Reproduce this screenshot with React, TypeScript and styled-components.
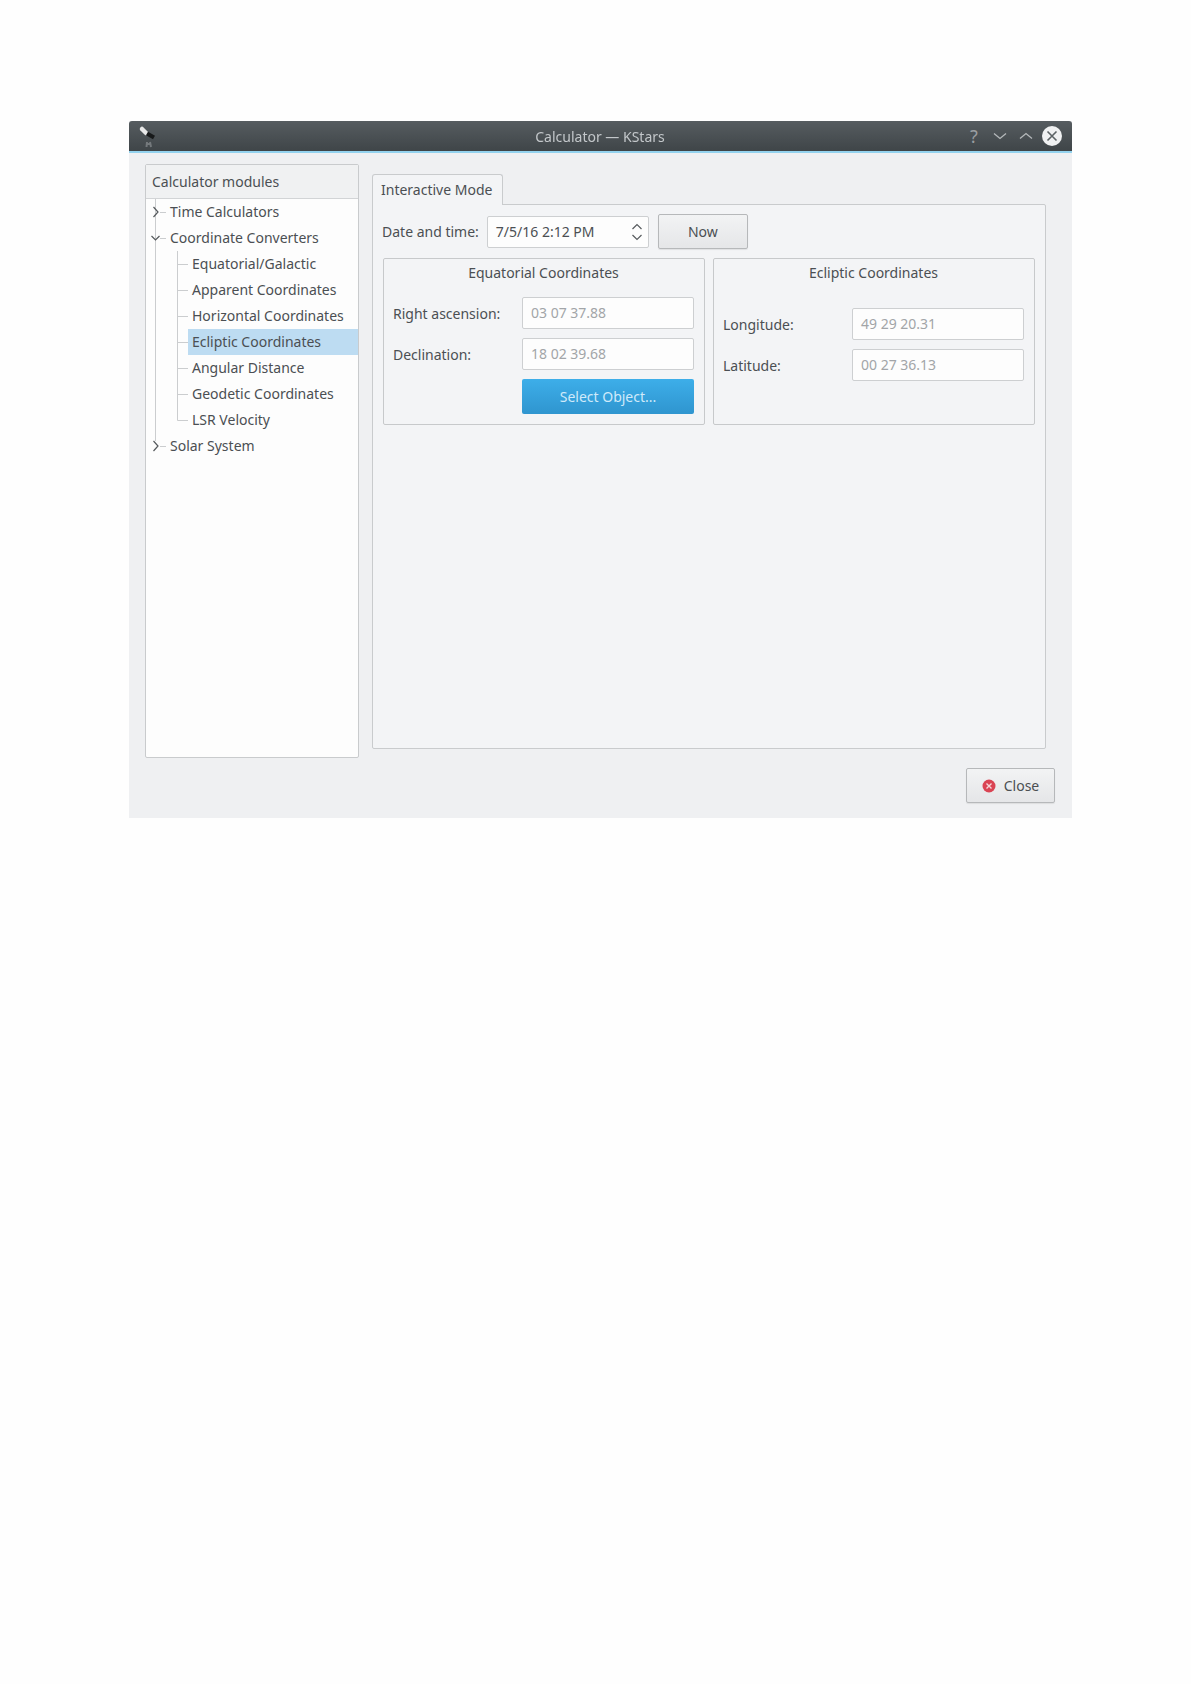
import React from "react";
import styled, { createGlobalStyle } from "styled-components";

const Global = createGlobalStyle`
  html, body { margin: 0; padding: 0; background: #fefefe; }
  body { font-family: "Noto Sans", "Open Sans", sans-serif; font-size: 14px; color: #4b4f53; }
`;

const Page = styled.div`
  height: 1684px;
  padding: 121px 0 0 129px;
  box-sizing: border-box;
`;
const Win = styled.div`
  width: 943px;
  height: 697px;
  background: #eff0f2;
  display: flex;
  flex-direction: column;
  filter: blur(0.4px);
`;
const TitleBar = styled.div`
  height: 30px;
  flex: none;
  position: relative;
  display: flex;
  align-items: center;
  justify-content: flex-end;
  gap: 6px;
  padding-right: 10px;
  background: linear-gradient(#565c60, #3f4548);
  border-bottom: 2px solid #93d2ee;
  border-radius: 3px 3px 0 0;
`;
const TitleText = styled.div`
  position: absolute;
  left: -1px;
  right: 0;
  top: 0;
  line-height: 31px;
  text-align: center;
  color: #c3c7ca;
`;
const AppIcon = styled.svg`
  position: absolute;
  left: 8px;
  top: 4px;
`;
const WinBtn = styled.svg`
  display: block;
`;
const Help = styled.span`
  width: 20px;
  text-align: center;
  color: #9a9ea1;
  font-size: 18px;
  line-height: 29px;
`;
const Main = styled.div`
  flex: 1;
  min-height: 0;
  display: flex;
  gap: 13px;
  padding: 11px 26px 0 16px;
`;
const TreePanel = styled.div`
  width: 214px;
  flex: none;
  box-sizing: border-box;
  border: 1px solid #c9cbcd;
  border-radius: 2px;
  background: #fdfdfd;
`;
const TreeHeader = styled.div`
  height: 33px;
  line-height: 33px;
  padding-left: 6px;
  background: #f0f1f2;
  border-bottom: 1px solid #d2d4d6;
`;
const Row = styled.div`
  height: 26px;
  display: flex;
  white-space: nowrap;
`;
const Guide = styled.svg`
  flex: none;
  display: block;
`;
const RowLabel = styled.div<{ $selected?: boolean }>`
  flex: 1;
  line-height: 26px;
  padding-left: 4px;
  background: ${(p) => (p.$selected ? "#bddcf2" : "transparent")};
`;
const Right = styled.div`
  flex: 1;
  padding: 10px 0 9px;
  display: flex;
  flex-direction: column;
  min-width: 0;
`;
const Tab = styled.div`
  align-self: flex-start;
  width: 131px;
  height: 31px;
  box-sizing: border-box;
  line-height: 29px;
  padding-left: 8px;
  background: #f3f4f6;
  border: 1px solid #c9cbcd;
  border-bottom: none;
  border-radius: 3px 3px 0 0;
  margin-bottom: -1px;
  position: relative;
  z-index: 1;
`;
const Pane = styled.div`
  flex: 1;
  box-sizing: border-box;
  background: #f3f4f6;
  border: 1px solid #c9cbcd;
  border-radius: 0 2px 2px 2px;
  padding: 9px 10px 0 9px;
`;
const DateRow = styled.div`
  display: flex;
  align-items: center;
  height: 35px;
`;
const DateField = styled.div`
  width: 162px;
  height: 32px;
  box-sizing: border-box;
  margin-left: 8px;
  padding: 0 5px 0 8px;
  display: flex;
  align-items: center;
  justify-content: space-between;
  background: #fdfdfd;
  border: 1px solid #cdcfd1;
  border-radius: 2px;
`;
const Button = styled.div`
  height: 35px;
  box-sizing: border-box;
  display: flex;
  align-items: center;
  justify-content: center;
  gap: 8px;
  background: linear-gradient(#f2f3f4, #e5e6e8);
  border: 1px solid #b6b8ba;
  border-radius: 2px;
  box-shadow: 0 1px 1px rgba(0, 0, 0, 0.08);
`;
const NowButton = styled(Button)`
  width: 90px;
  margin-left: 9px;
`;
const Groups = styled.div`
  display: flex;
  gap: 8px;
  margin: 9px 0 0 1px;
`;
const Group = styled.div`
  flex: 1;
  height: 167px;
  box-sizing: border-box;
  border: 1px solid #c7c9cb;
  border-radius: 2px;
  padding: 0 10px 0 9px;
  background: #f3f4f6;
`;
const GroupTitle = styled.div`
  height: 30px;
  line-height: 28px;
  text-align: center;
`;
const Fields = styled.div<{ $top: number }>`
  display: flex;
  flex-direction: column;
  gap: 9px;
  padding-top: ${(p) => p.$top}px;
`;
const Field = styled.div`
  display: flex;
  align-items: center;
  justify-content: space-between;
`;
const ValueBox = styled.div`
  width: 172px;
  height: 32px;
  line-height: 30px;
  box-sizing: border-box;
  padding-left: 8px;
  color: #a2a5a8;
  background: #fdfdfd;
  border: 1px solid #cdcfd1;
  border-radius: 2px;
`;
const SelectButton = styled.div`
  width: 172px;
  height: 35px;
  line-height: 35px;
  align-self: flex-end;
  text-align: center;
  color: #cfeafa;
  background: linear-gradient(#3daee9, #2f95cf);
  border-radius: 2px;
`;
const Footer = styled.div`
  flex: none;
  display: flex;
  justify-content: flex-end;
  padding: 10px 17px 15px 0;
`;
const CloseButton = styled(Button)`
  width: 89px;
`;

const Chevron = ({ open, y = 13 }: { open?: boolean; y?: number }) =>
  open ? (
    <path d={`M5.5 ${y - 2}L9.5 ${y + 2}L13.5 ${y - 2}`} fill="none" stroke="#55595c" strokeWidth="1.2" />
  ) : (
    <path d={`M7.5 ${y - 5}L12 ${y}L7.5 ${y + 5}`} fill="none" stroke="#55595c" strokeWidth="1.2" />
  );

const line = "#cbcdcf";

const TopRow = ({ label, open, last }: { label: string; open?: boolean; last?: boolean }) => (
  <Row>
    <Guide width={20} height={26}>
      <path d={`M9.5 0V${last ? 8 : 26}`} stroke={line} />
      <path d="M14 13.5H20" stroke={line} />
      <Chevron open={open} />
    </Guide>
    <RowLabel>{label}</RowLabel>
  </Row>
);

const SubRow = ({ label, last, selected }: { label: string; last?: boolean; selected?: boolean }) => (
  <Row>
    <Guide width={42} height={26}>
      <path d="M9.5 0V26" stroke={line} />
      <path d={`M31.5 0V${last ? 13.5 : 26}`} stroke={line} />
      <path d="M31.5 13.5H42" stroke={line} />
    </Guide>
    <RowLabel $selected={selected}>{label}</RowLabel>
  </Row>
);

const Value = ({ label, value }: { label: string; value: string }) => (
  <Field>
    <span>{label}</span>
    <ValueBox>{value}</ValueBox>
  </Field>
);

export default function App() {
  return (
    <Page>
      <Global />
      <Win>
        <TitleBar>
          <AppIcon width="20" height="24" viewBox="0 0 20 24">
            <path d="M5 4L9 8" stroke="#e8e8e8" strokeWidth="4.5" strokeLinecap="round" />
            <path d="M10 8.5L17 12.5" stroke="#17191a" strokeWidth="4" />
            <path d="M10 17L9.5 22M13 17L14 22M10 19H13" stroke="#74797c" strokeWidth="2" fill="none" />
          </AppIcon>
          <TitleText>Calculator — KStars</TitleText>
          <Help>?</Help>
          <WinBtn width="20" height="20" viewBox="0 0 20 20">
            <path d="M4 7.5L10 12.5L16 7.5" fill="none" stroke="#b5b9bb" strokeWidth="1.3" />
          </WinBtn>
          <WinBtn width="20" height="20" viewBox="0 0 20 20">
            <path d="M4 12.5L10 7.5L16 12.5" fill="none" stroke="#b5b9bb" strokeWidth="1.3" />
          </WinBtn>
          <WinBtn width="20" height="20" viewBox="0 0 20 20">
            <circle cx="10" cy="10" r="10" fill="#f0f1f2" />
            <path d="M5.5 5.5L14.5 14.5M14.5 5.5L5.5 14.5" stroke="#5c6265" strokeWidth="1.6" />
          </WinBtn>
        </TitleBar>
        <Main>
          <TreePanel>
            <TreeHeader>Calculator modules</TreeHeader>
            <TopRow label="Time Calculators" />
            <TopRow label="Coordinate Converters" open />
            <SubRow label="Equatorial/Galactic" />
            <SubRow label="Apparent Coordinates" />
            <SubRow label="Horizontal Coordinates" />
            <SubRow label="Ecliptic Coordinates" selected />
            <SubRow label="Angular Distance" />
            <SubRow label="Geodetic Coordinates" />
            <SubRow label="LSR Velocity" last />
            <TopRow label="Solar System" last />
          </TreePanel>
          <Right>
            <Tab>Interactive Mode</Tab>
            <Pane>
              <DateRow>
                <span>Date and time:</span>
                <DateField>
                  <span>7/5/16 2:12 PM</span>
                  <svg width="12" height="20" viewBox="0 0 12 20">
                    <path d="M1.5 7L6 2.5L10.5 7M1.5 13L6 17.5L10.5 13" fill="none" stroke="#55595c" strokeWidth="1.2" />
                  </svg>
                </DateField>
                <NowButton>Now</NowButton>
              </DateRow>
              <Groups>
                <Group>
                  <GroupTitle>Equatorial Coordinates</GroupTitle>
                  <Fields $top={8}>
                    <Value label="Right ascension:" value="03 07 37.88" />
                    <Value label="Declination:" value="18 02 39.68" />
                    <SelectButton>Select Object...</SelectButton>
                  </Fields>
                </Group>
                <Group>
                  <GroupTitle>Ecliptic Coordinates</GroupTitle>
                  <Fields $top={19}>
                    <Value label="Longitude:" value="49 29 20.31" />
                    <Value label="Latitude:" value="00 27 36.13" />
                  </Fields>
                </Group>
              </Groups>
            </Pane>
          </Right>
        </Main>
        <Footer>
          <CloseButton>
            <svg width="14" height="14" viewBox="0 0 14 14">
              <circle cx="7" cy="7" r="6.5" fill="#da4453" />
              <path d="M4.5 4.5L9.5 9.5M9.5 4.5L4.5 9.5" stroke="#f6d5d9" strokeWidth="1.4" />
            </svg>
            Close
          </CloseButton>
        </Footer>
      </Win>
    </Page>
  );
}
